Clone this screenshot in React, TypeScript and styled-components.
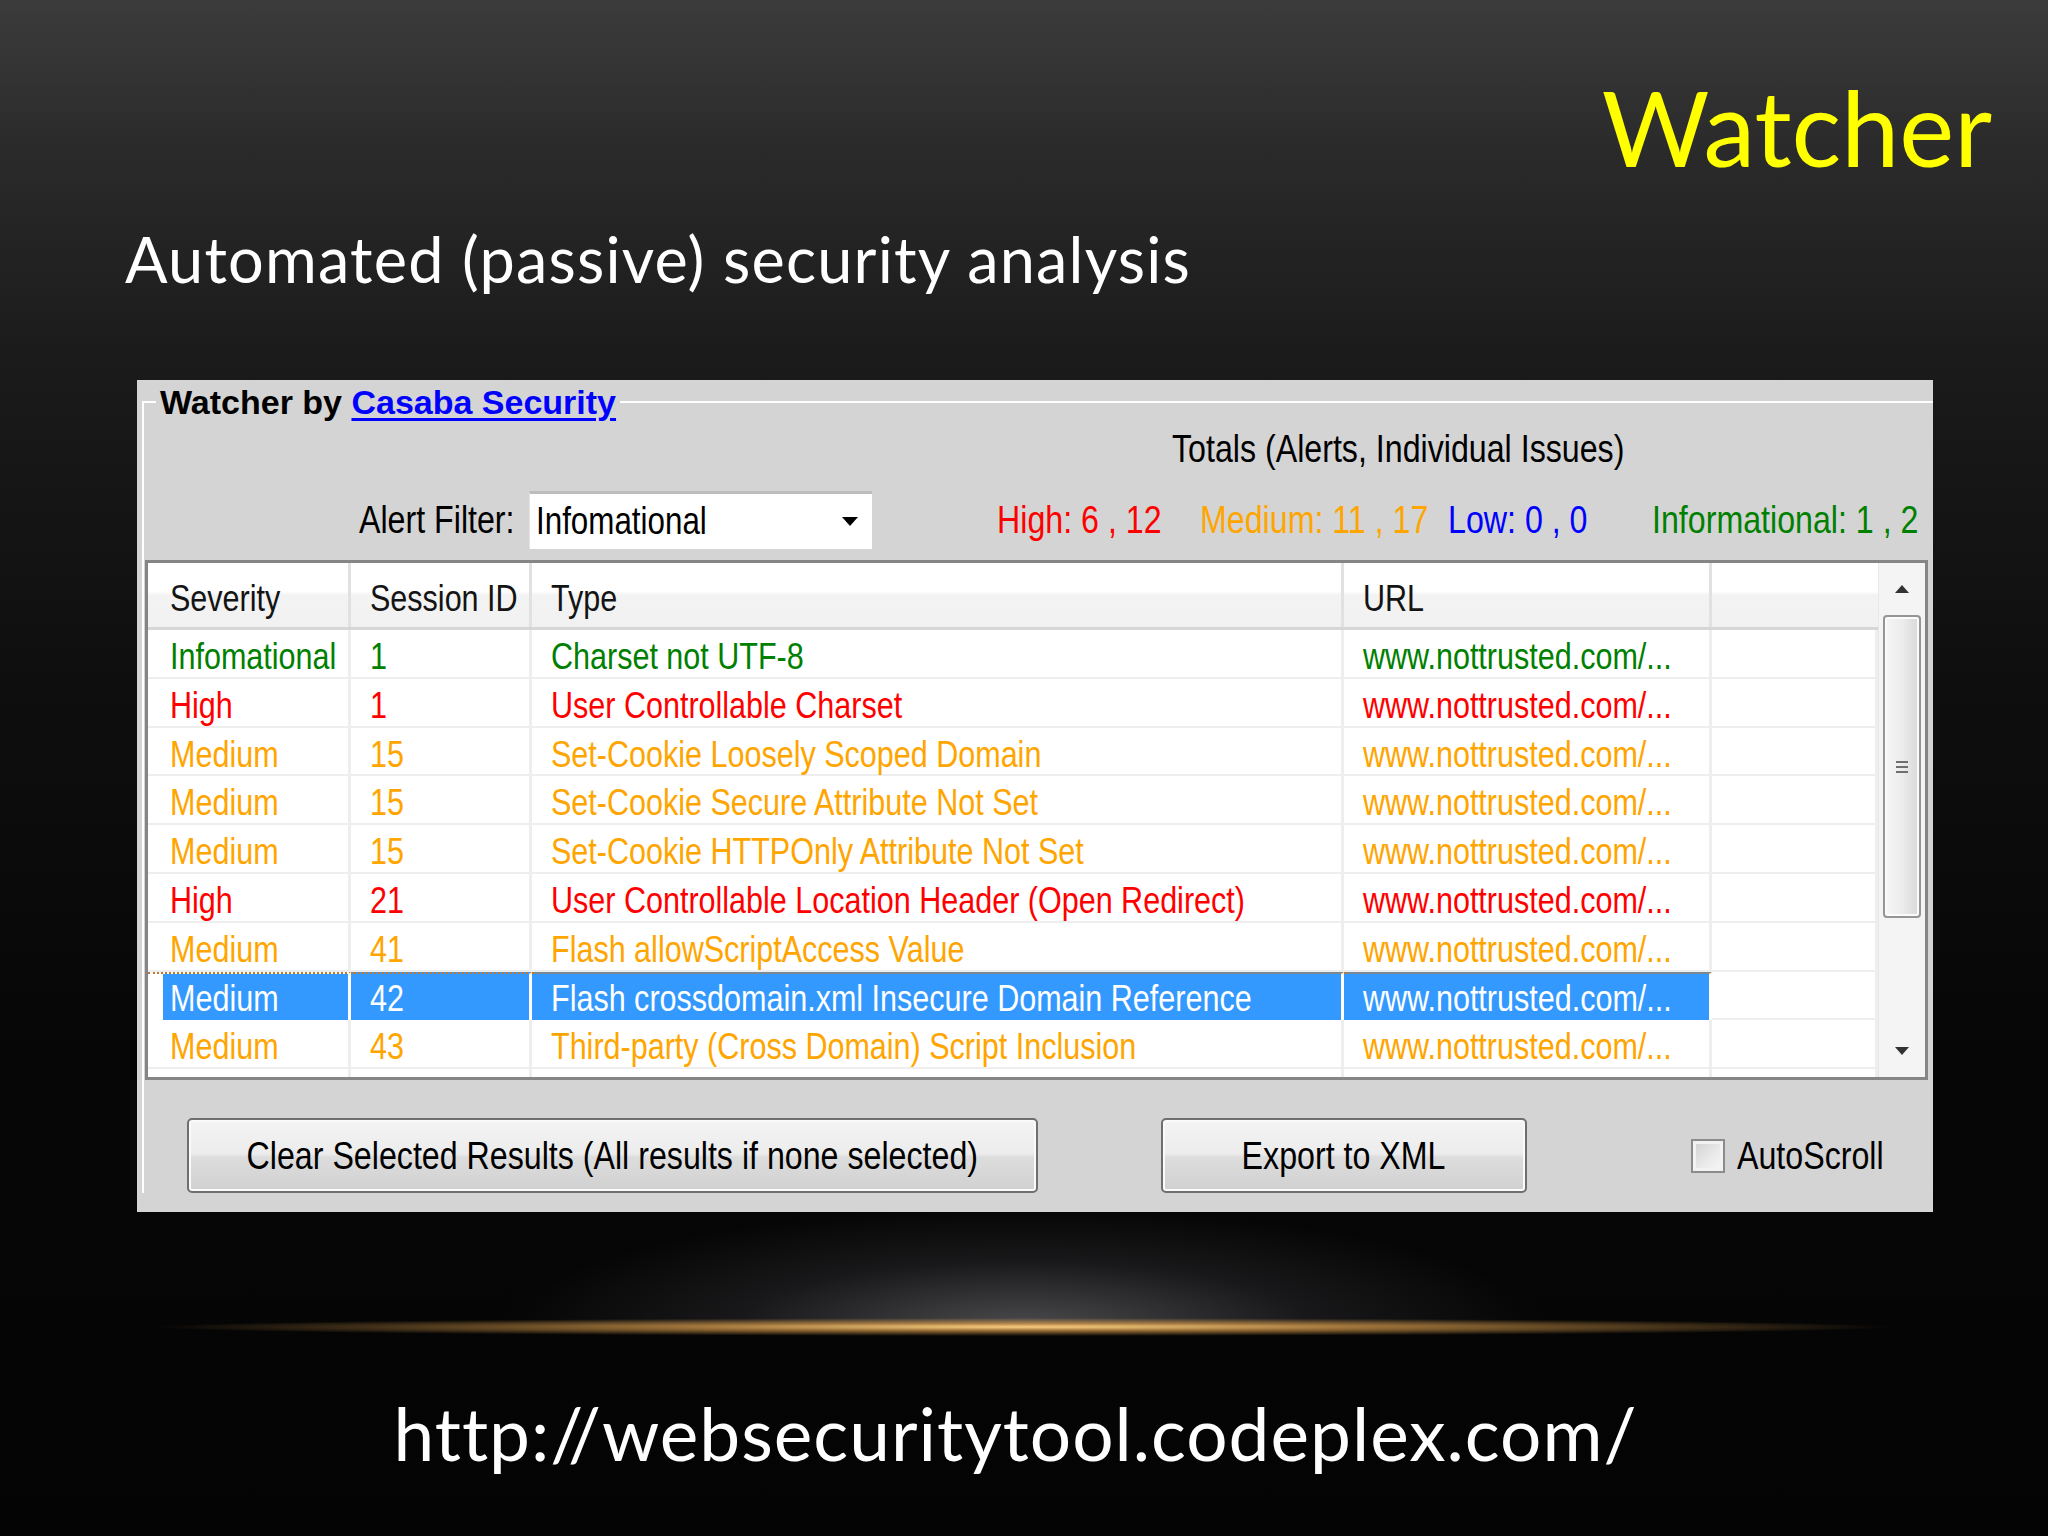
import React from "react";
import styled, {createGlobalStyle, css} from "styled-components";

const UI_FONT = `"Liberation Sans", Arial, sans-serif`;
const SLIDE_FONT = `Lato, "Open Sans", sans-serif`;

type Level = "info" | "high" | "medium" | "low";

const levelColor: Record<Level, string> = {
    info: "#008000",
    high: "#ff0000",
    medium: "#ffa500",
    low: "#0000ff",
};

const rows: { severity: string, session: string, type: string, level: Level, selected?: boolean }[] = [
    {severity: "Infomational", session: "1", type: "Charset not UTF-8", level: "info"},
    {severity: "High", session: "1", type: "User Controllable Charset", level: "high"},
    {severity: "Medium", session: "15", type: "Set-Cookie Loosely Scoped Domain", level: "medium"},
    {severity: "Medium", session: "15", type: "Set-Cookie Secure Attribute Not Set", level: "medium"},
    {severity: "Medium", session: "15", type: "Set-Cookie HTTPOnly Attribute Not Set", level: "medium"},
    {severity: "High", session: "21", type: "User Controllable Location Header (Open Redirect)", level: "high"},
    {severity: "Medium", session: "41", type: "Flash allowScriptAccess Value", level: "medium"},
    {severity: "Medium", session: "42", type: "Flash crossdomain.xml Insecure Domain Reference", level: "medium", selected: true},
    {severity: "Medium", session: "43", type: "Third-party (Cross Domain) Script Inclusion", level: "medium"},
];

const totals: { label: string, level: Level, width: number }[] = [
    {label: "High: 6 , 12", level: "high", width: 203},
    {label: "Medium: 11 , 17", level: "medium", width: 248},
    {label: "Low: 0 , 0", level: "low", width: 204},
    {label: "Informational: 1 , 2", level: "info", width: 270},
];

const App = () => {
    return (
        <>
            <GlobalStyle/>
            <Slide>
                <Title>Watcher</Title>
                <Subtitle>Automated (passive) security analysis</Subtitle>

                <Panel>
                    <GroupBox>
                        <Legend>Watcher by <LegendLink>Casaba Security</LegendLink></Legend>

                        <TotalsHeading><Squeeze>Totals (Alerts, Individual Issues)</Squeeze></TotalsHeading>

                        <FilterRow>
                            <FilterLabel><Squeeze $origin="right">Alert Filter:</Squeeze></FilterLabel>
                            <Combo>
                                <Squeeze>Infomational</Squeeze>
                                <svg width="16" height="10" viewBox="0 0 16 10">
                                    <polygon points="0,0 16,0 8,9" fill="#000"/>
                                </svg>
                            </Combo>
                            <TotalsList>
                                {totals.map(t => (
                                    <TotalItem key={t.label} $level={t.level} $width={t.width}>
                                        <Squeeze>{t.label}</Squeeze>
                                    </TotalItem>
                                ))}
                            </TotalsList>
                        </FilterRow>

                        <ListBox>
                            <ListArea>
                                <HeaderRow>
                                    <HeaderCell $first><Squeeze>Severity</Squeeze></HeaderCell>
                                    <HeaderCell><Squeeze>Session ID</Squeeze></HeaderCell>
                                    <HeaderCell><Squeeze>Type</Squeeze></HeaderCell>
                                    <HeaderCell><Squeeze>URL</Squeeze></HeaderCell>
                                    <HeaderCell $last/>
                                </HeaderRow>
                                {rows.map((r, i) => (
                                    <BodyRow key={i}>
                                        <Cell $level={r.level} $selected={r.selected} $first><Squeeze>{r.severity}</Squeeze></Cell>
                                        <Cell $level={r.level} $selected={r.selected}><Squeeze>{r.session}</Squeeze></Cell>
                                        <Cell $level={r.level} $selected={r.selected}><Squeeze>{r.type}</Squeeze></Cell>
                                        <Cell $level={r.level} $selected={r.selected}><Squeeze>www.nottrusted.com/...</Squeeze></Cell>
                                        <Cell $level={r.level}/>
                                    </BodyRow>
                                ))}
                                <BodyRow>
                                    <Cell $level="medium" $first/>
                                    <Cell $level="medium"/>
                                    <Cell $level="medium"/>
                                    <Cell $level="medium"/>
                                    <Cell $level="medium"/>
                                </BodyRow>
                            </ListArea>
                            <ScrollBar>
                                <ScrollArrow>
                                    <svg width="14" height="9" viewBox="0 0 14 9">
                                        <polygon points="7,0 14,8 0,8" fill="#333333"/>
                                    </svg>
                                </ScrollArrow>
                                <Thumb>
                                    <svg width="14" height="14" viewBox="0 0 14 14">
                                        <rect x="1" y="1" width="12" height="2" fill="#6f6f6f"/>
                                        <rect x="1" y="6" width="12" height="2" fill="#6f6f6f"/>
                                        <rect x="1" y="11" width="12" height="2" fill="#6f6f6f"/>
                                    </svg>
                                </Thumb>
                                <ScrollTrack/>
                                <ScrollArrow>
                                    <svg width="14" height="9" viewBox="0 0 14 9">
                                        <polygon points="0,0 14,0 7,8" fill="#333333"/>
                                    </svg>
                                </ScrollArrow>
                            </ScrollBar>
                        </ListBox>

                        <ButtonRow>
                            <PushButton $width={851}>
                                <Squeeze $origin="center">Clear Selected Results (All results if none selected)</Squeeze>
                            </PushButton>
                            <PushButton $width={366} $gap={123}>
                                <Squeeze $origin="center">Export to XML</Squeeze>
                            </PushButton>
                            <CheckLabel>
                                <CheckBox/>
                                <Squeeze>AutoScroll</Squeeze>
                            </CheckLabel>
                        </ButtonRow>
                    </GroupBox>
                </Panel>

                <Glow/>
                <Url>http://websecuritytool.codeplex.com/</Url>
            </Slide>
        </>
    );
};

export default App;

const GlobalStyle = createGlobalStyle`
  html, body {
    margin: 0;
    padding: 0;
    background: #050505;
  }

  body {
    width: 2048px;
    height: 1536px;
    overflow: hidden;
  }
`;

// the dialog in the slide is a stretched screenshot: its text is tall and narrow
const Squeeze = styled.span<{ $origin?: "left" | "center" | "right" }>`
  display: inline-block;
  white-space: nowrap;
  transform: scaleX(0.825);
  transform-origin: ${p => p.$origin || "left"} center;
`;

const Slide = styled.div`
  width: 2048px;
  height: 1536px;
  display: flex;
  flex-direction: column;
  font-family: ${SLIDE_FONT};
  background: linear-gradient(180deg, #3b3b3b 0%, #2a2a2a 10%, #1a1a1a 24%, #0e0e0e 45%, #060606 70%, #040404 100%);
`;

const Title = styled.h1`
  margin: 75px 56px 0 0;
  text-align: right;
  font-size: 104px;
  line-height: 1;
  font-weight: 400;
  color: #ffff00;
`;

const Subtitle = styled.h2`
  margin: 48px 0 0 125px;
  font-size: 63px;
  line-height: 1;
  font-weight: 400;
  letter-spacing: 1.2px;
  color: #ffffff;
`;

const Panel = styled.div`
  margin: 90px 0 0 137px;
  width: 1796px;
  height: 832px;
  box-sizing: border-box;
  background: #d4d4d4;
  overflow: hidden;
  font-family: ${UI_FONT};
  color: #000;
`;

const GroupBox = styled.fieldset`
  margin: 1px 0 0 5px;
  padding: 0;
  min-width: 0;
  border: none;
  border-top: 2px solid #ffffff;
  border-left: 2px solid #ffffff;
  display: flex;
  flex-direction: column;
`;

const Legend = styled.legend`
  margin-left: 12px;
  padding: 0 4px;
  font-size: 34px;
  line-height: 42px;
  font-weight: 700;
  white-space: nowrap;
`;

const LegendLink = styled.span`
  color: #0000ff;
  text-decoration: underline;
  text-decoration-thickness: 3px;
  text-underline-offset: 4px;
`;

const TotalsHeading = styled.div`
  margin: 4px 0 0 1028px;
  font-size: 39px;
  line-height: 44px;
  white-space: nowrap;
`;

const FilterRow = styled.div`
  margin-top: 20px;
  height: 58px;
  display: flex;
  align-items: center;
`;

const FilterLabel = styled.div`
  width: 371px;
  text-align: right;
  font-size: 39px;
  white-space: nowrap;
`;

const Combo = styled.div`
  margin-left: 14px;
  width: 343px;
  height: 58px;
  box-sizing: border-box;
  display: flex;
  align-items: center;
  justify-content: space-between;
  padding: 0 14px 0 6px;
  background: #ffffff;
  border-top: 3px solid #bdbdbd;
  border-left: 1px solid #e4e4e4;
  font-size: 38px;
`;

const TotalsList = styled.div`
  margin-left: 125px;
  display: flex;
  align-items: center;
`;

const TotalItem = styled.div<{ $level: Level, $width: number }>`
  width: ${p => p.$width}px;
  flex: none;
  font-size: 39px;
  white-space: nowrap;
  color: ${p => levelColor[p.$level]};
`;

const ListBox = styled.div`
  margin: 11px 5px 0 1px;
  height: 520px;
  box-sizing: border-box;
  border: 3px solid #858585;
  background: #ffffff;
  display: flex;
  overflow: hidden;
`;

const ListArea = styled.div`
  flex: 1;
  display: flex;
  flex-direction: column;
  overflow: hidden;
`;

const COLUMNS = "203px 181px 812px 368px 1fr";

const HeaderRow = styled.div`
  flex: none;
  height: 67px;
  box-sizing: border-box;
  display: grid;
  grid-template-columns: ${COLUMNS};
  border-bottom: 3px solid #d6d6d6;
  background: linear-gradient(180deg, #ffffff 0%, #ffffff 44%, #f3f3f3 50%, #f1f1f1 100%);
`;

const HeaderCell = styled.div<{ $first?: boolean, $last?: boolean }>`
  display: flex;
  align-items: center;
  padding: 8px 0 0 ${p => p.$first ? 22 : 19}px;
  border-right: 3px solid ${p => p.$last ? "transparent" : "#e1e1e1"};
  font-size: 37px;
  color: #141414;
`;

const BodyRow = styled.div`
  flex: none;
  height: 48.8px;
  box-sizing: border-box;
  display: grid;
  grid-template-columns: ${COLUMNS};
  border-bottom: 2px solid #eeeeee;
`;

const Cell = styled.div<{ $level: Level, $selected?: boolean, $first?: boolean }>`
  display: flex;
  align-items: center;
  padding: 6px 0 0 ${p => p.$first ? 22 : 19}px;
  border-right: 3px solid #eeeeee;
  font-size: 37px;
  color: ${p => levelColor[p.$level]};

  ${p => p.$selected && css`
    color: #ffffff;
    background: #3399ff;
    border-top: 2px dotted #c0782c;
    padding-top: 4px;
    border-right-color: #ffffff;
  `}

  ${p => p.$selected && p.$first && css`
    background: linear-gradient(90deg, #ffffff 15px, #3399ff 15px);
    background-clip: padding-box;
  `}
`;

const ScrollBar = styled.div`
  flex: none;
  width: 46px;
  display: flex;
  flex-direction: column;
  align-items: center;
  background: #f4f4f4;
  border-left: 1px solid #e8e8e8;
`;

const ScrollArrow = styled.div`
  flex: none;
  height: 52px;
  width: 100%;
  display: flex;
  align-items: center;
  justify-content: center;
`;

const Thumb = styled.div`
  flex: none;
  width: 38px;
  height: 303px;
  box-sizing: border-box;
  border: 2px solid #959595;
  border-radius: 4px;
  background: linear-gradient(90deg, #f6f6f6 0%, #ececec 50%, #d8d8d8 100%);
  box-shadow: inset 0 0 0 2px #fbfbfb;
  display: flex;
  align-items: center;
  justify-content: center;
`;

const ScrollTrack = styled.div`
  flex: 1;
`;

const ButtonRow = styled.div`
  margin: 38px 0 0 43px;
  height: 75px;
  display: flex;
  align-items: center;
`;

const PushButton = styled.div<{ $width: number, $gap?: number }>`
  flex: none;
  margin-left: ${p => p.$gap || 0}px;
  width: ${p => p.$width}px;
  height: 75px;
  box-sizing: border-box;
  border: 2px solid #6f6f6f;
  border-radius: 5px;
  background: linear-gradient(180deg, #f4f4f4 0%, #ececec 48%, #dddddd 52%, #d0d0d0 100%);
  box-shadow: inset 0 0 0 2px #fafafa;
  display: flex;
  align-items: center;
  justify-content: center;
  font-size: 39px;
  white-space: nowrap;
`;

const CheckLabel = styled.div`
  margin-left: 164px;
  display: flex;
  align-items: center;
  gap: 12px;
  font-size: 39px;
  white-space: nowrap;
`;

const CheckBox = styled.div`
  width: 34px;
  height: 34px;
  box-sizing: border-box;
  border: 2px solid #8c8c8c;
  background: linear-gradient(135deg, #cfcfcf 0%, #e9e9e9 55%, #f7f7f7 100%);
  box-shadow: inset 0 0 0 3px #f2f2f2;
`;

const Glow = styled.div`
  flex: none;
  height: 185px;
  background-image: radial-gradient(ellipse 870px 9px at 50% 115px, rgba(250, 205, 125, 1) 0%, rgba(215, 155, 75, 0.7) 40%, rgba(120, 80, 30, 0) 100%),
  radial-gradient(ellipse 520px 120px at 50% 115px, rgba(105, 105, 110, 0.7) 0%, rgba(60, 60, 65, 0.35) 55%, rgba(0, 0, 0, 0) 100%);
  background-size: 100% 100%, 100% 115px;
  background-position: top left, top left;
  background-repeat: no-repeat;
`;

const Url = styled.div`
  padding-right: 17px;
  text-align: center;
  font-size: 73px;
  line-height: 1;
  letter-spacing: 1px;
  color: #ffffff;
`;
